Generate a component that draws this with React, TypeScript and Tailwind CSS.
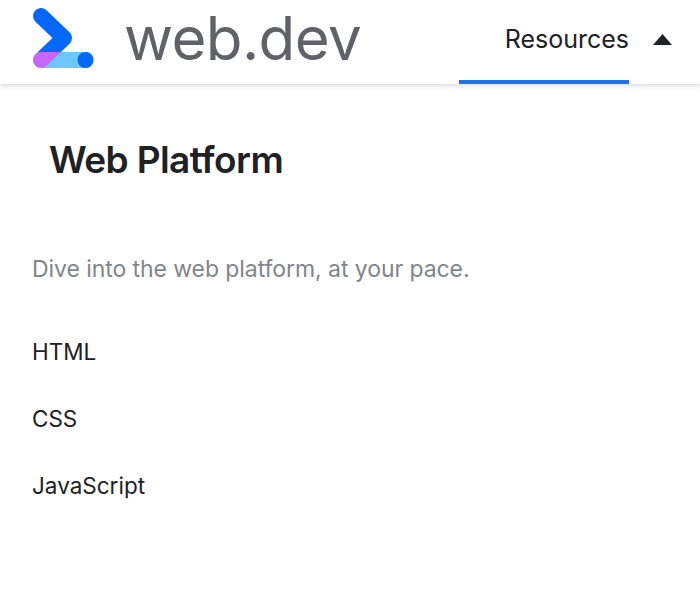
import React from 'react';

const Logo = () => (
  <svg width="94" height="84" viewBox="0 0 94 84" className="shrink-0">
    <defs>
      <clipPath id="logo-top">
        <rect x="0" y="0" width="94" height="52" />
      </clipPath>
      <clipPath id="logo-bottom">
        <rect x="0" y="52" width="94" height="32" />
      </clipPath>
    </defs>
    <path d="M41 60H85.500" stroke="#6cc7ff" strokeWidth="16" strokeLinecap="round" fill="none" />
    <path d="M64 38L41 60" stroke="#c865fb" strokeWidth="16" strokeLinecap="round" fill="none" clipPath="url(#logo-bottom)" />
    <path d="M41 16L64 38L41 60" stroke="#0468ff" strokeWidth="16" strokeLinecap="round" strokeLinejoin="round" fill="none" clipPath="url(#logo-top)" />
    <circle cx="85.500" cy="60" r="8" fill="#0468ff" />
  </svg>
);

const App = () => {
  return (
    <div className="w-[700px] h-[609px] bg-white overflow-hidden font-['Inter','Liberation_Sans',sans-serif]">
      <header className="h-[84px] flex items-stretch bg-white shadow-[0_2px_4px_rgba(60,64,67,0.18)]">
        <Logo />
        <span className="ml-[30px] self-center text-[60px] leading-none tracking-[-0.6px] text-[#5f6368] -mt-2">
          web.dev
        </span>
        <div className="ml-auto flex items-center">
          <div className="w-[170px] h-full flex items-center justify-end border-b-4 border-[#1a73e8] text-[25px] text-[#202124]">
            Resources
          </div>
          <svg width="19" height="11" viewBox="0 0 19 11" className="ml-[24px] mr-[28px] -mt-1.5">
            <path d="M9.5 0L19 11H0Z" fill="#202124" />
          </svg>
        </div>
      </header>
      <main className="px-8">
        <h1 className="mt-[54px] ml-[17px] text-[37px] leading-[44px] font-semibold text-[#202124] tracking-[-0.6px]">
          Web Platform
        </h1>
        <p className="mt-[71px] text-[23px] leading-8 text-[#80868b] tracking-[-0.07px]">
          Dive into the web platform, at your pace.
        </p>
        <ul className="mt-[51px] flex flex-col gap-[35px] text-[22.500px] leading-8 text-[#202124]">
          <li>HTML</li>
          <li>CSS</li>
          <li>JavaScript</li>
        </ul>
      </main>
    </div>
  );
};

export default App;
